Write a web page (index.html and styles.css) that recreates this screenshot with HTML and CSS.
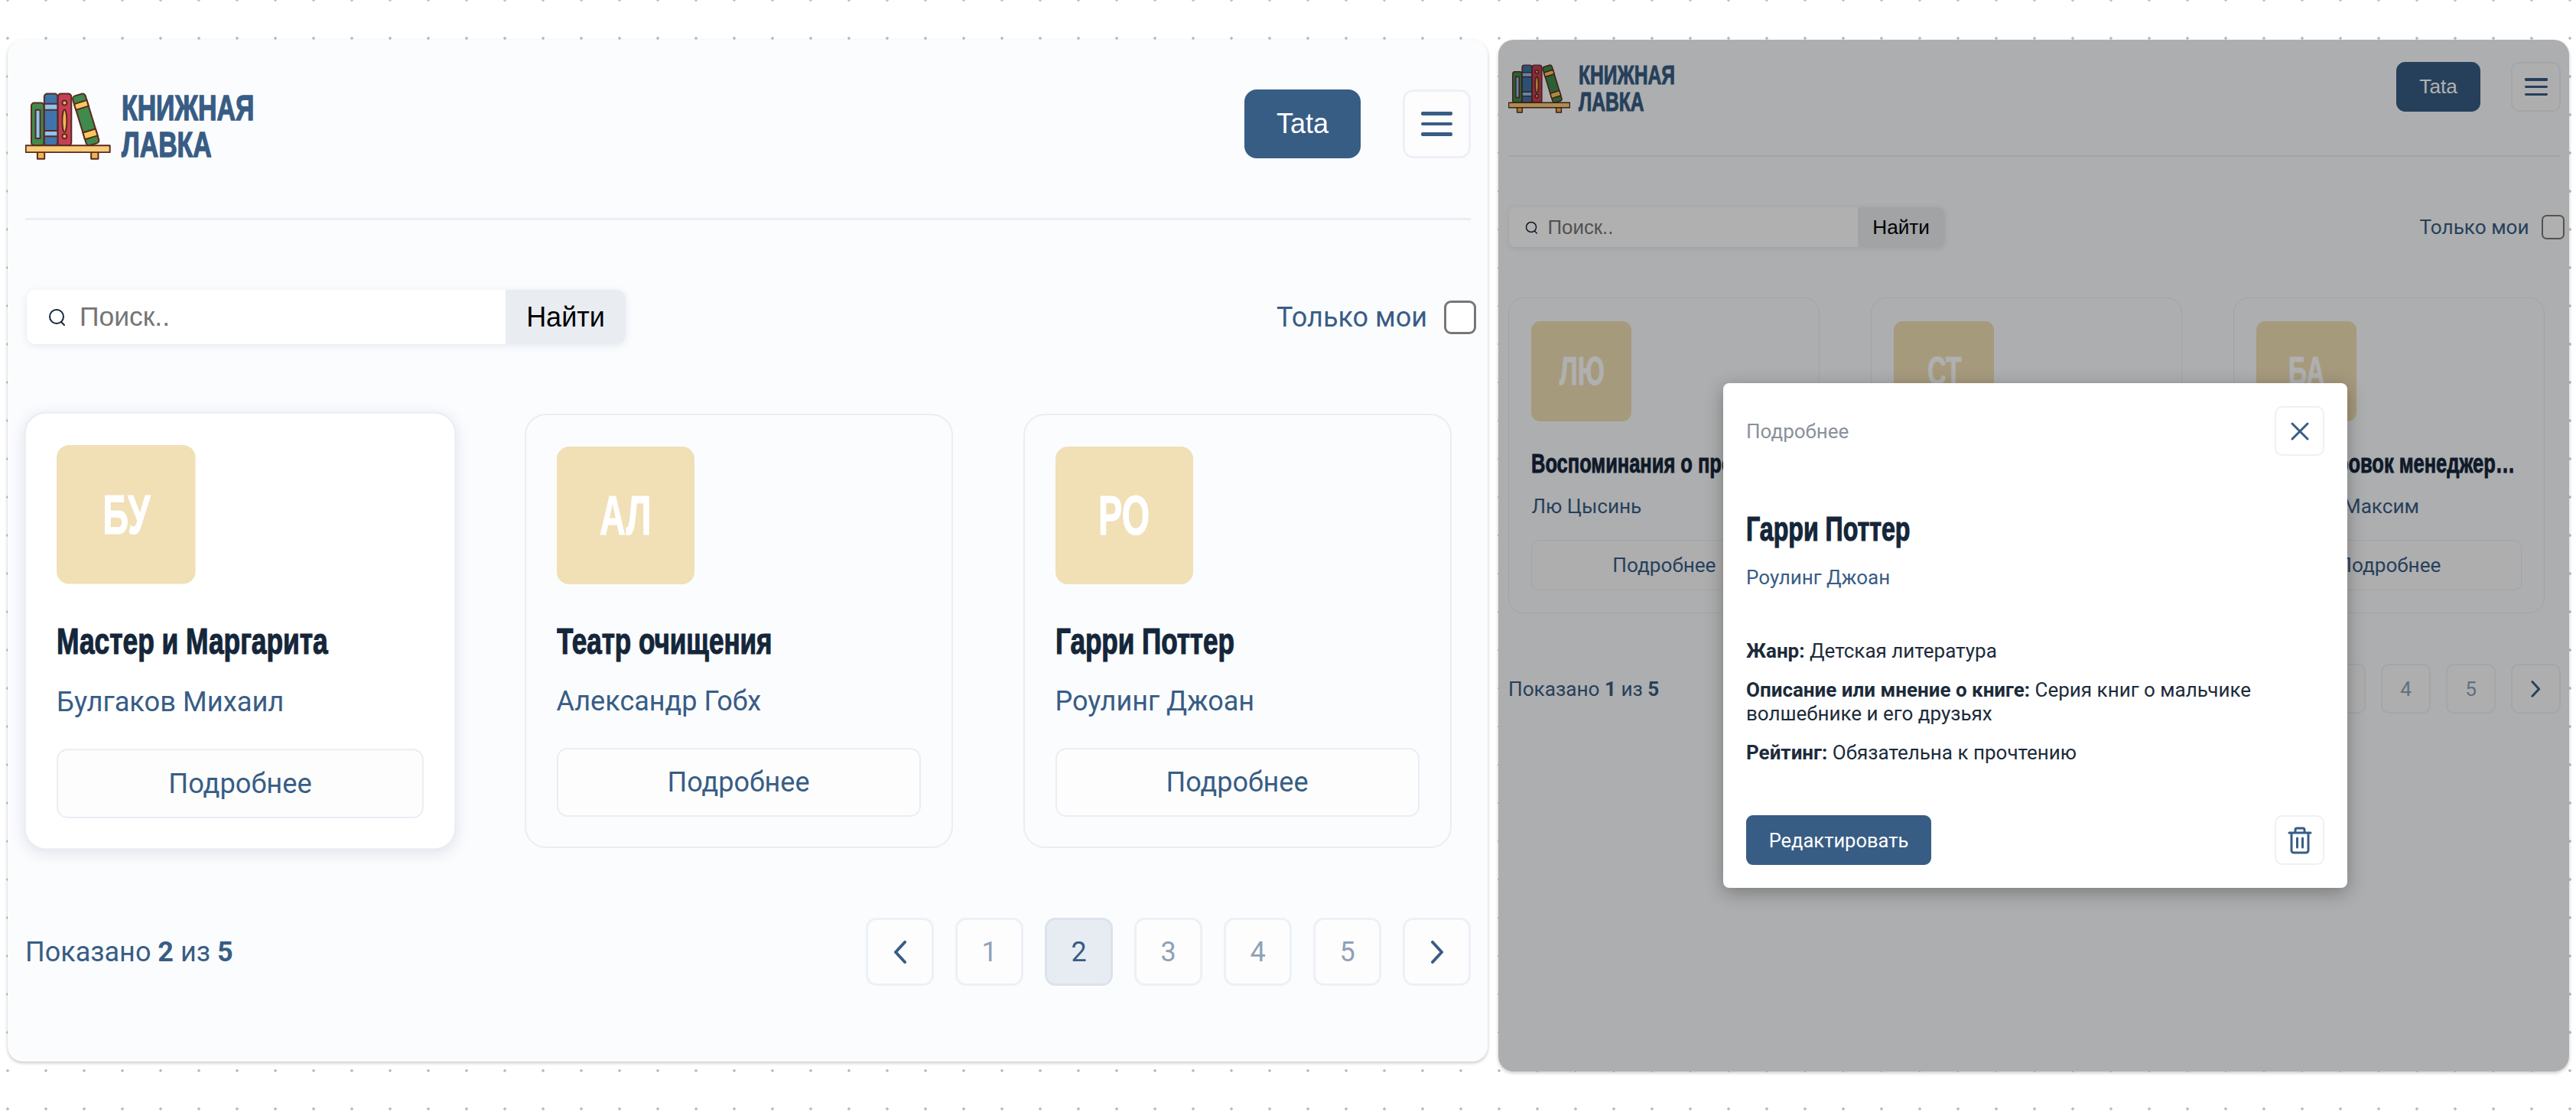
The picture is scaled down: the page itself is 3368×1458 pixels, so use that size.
FILE: index.html
```html
<!DOCTYPE html>
<html lang="ru">
<head>
    <meta charset="UTF-8">
    <meta name="viewport" content="width=device-width, initial-scale=1.0">
    <title>Книжная лавка</title>
    <link rel="stylesheet" href="styles.css">
</head>
<body>
    <svg class="sprite" width="0" height="0">
        <symbol id="logo" viewBox="98 114 338 264">
            <g stroke="#5b2a20" stroke-width="6" stroke-linejoin="round">
                <rect x="146" y="345" width="28" height="30" fill="#f2b550"/>
                <rect x="358" y="345" width="28" height="30" fill="#f2b550"/>
                <rect x="122" y="154" width="50" height="168" rx="12" fill="#3f8a4c"/>
                <rect x="139" y="182" width="18" height="112" fill="#8cc4f4"/>
                <rect x="173" y="118" width="53" height="204" rx="12" fill="#3f74ad"/>
                <rect x="173" y="158" width="53" height="24" fill="#8cc4f4"/>
                <rect x="173" y="264" width="53" height="22" fill="#8cc4f4"/>
                <rect x="227" y="118" width="53" height="204" rx="12" fill="#c63f57"/>
                <circle cx="253" cy="154" r="9" fill="#f2b550"/>
                <circle cx="253" cy="286" r="9" fill="#f2b550"/>
                <ellipse cx="253" cy="225" rx="9" ry="44" fill="#f2b550"/>
                <g transform="rotate(-17 337 220)">
                    <rect x="311" y="118" width="52" height="204" rx="12" fill="#3f8a4c"/>
                    <rect x="311" y="148" width="52" height="24" fill="#f9c860"/>
                    <rect x="311" y="266" width="52" height="28" fill="#f9c860"/>
                </g>
                <rect x="100" y="322" width="332" height="27" fill="#f9cd78"/>
            </g>
        </symbol>
        <symbol id="icon-search" viewBox="0 0 24 24">
            <circle cx="11" cy="11" r="9" fill="none" stroke="currentColor" stroke-width="2"/>
            <path d="M17 18l4 4" fill="none" stroke="currentColor" stroke-width="2" stroke-linecap="round"/>
        </symbol>
        <symbol id="icon-prev" viewBox="0 0 20 30">
            <path d="M16 2L4 15l12 13" fill="none" stroke="currentColor" stroke-width="4" stroke-linecap="round" stroke-linejoin="round"/>
        </symbol>
        <symbol id="icon-next" viewBox="0 0 20 30">
            <path d="M4 2l12 13L4 28" fill="none" stroke="currentColor" stroke-width="4" stroke-linecap="round" stroke-linejoin="round"/>
        </symbol>
    </svg>

    <main class="page">
        <section class="panel">
            <div class="panel-inner">
                <header class="topbar">
                    <div class="brand">
                        <svg class="brand-logo"><use href="#logo"/></svg>
                        <div class="brand-name"><span>КНИЖНАЯ</span><span>ЛАВКА</span></div>
                    </div>
                    <div class="topbar-actions">
                        <button class="btn-user" type="button">Tata</button>
                        <button class="btn-icon btn-menu" type="button" aria-label="Меню"><i></i><i></i><i></i></button>
                    </div>
                </header>

                <div class="toolbar">
                    <form class="search">
                        <div class="search-field">
                            <svg class="search-icon"><use href="#icon-search"/></svg>
                            <input class="search-input" type="text" placeholder="Поиск..">
                        </div>
                        <button class="search-btn" type="button">Найти</button>
                    </form>
                    <label class="only-mine">Только мои <input class="check" type="checkbox"></label>
                </div>

                <div class="cards">
                    <article class="card card-hover">
                        <div class="avatar"><span>БУ</span></div>
                        <h2 class="card-title">Мастер и Маргарита</h2>
                        <p class="card-author">Булгаков Михаил</p>
                        <button class="btn-more" type="button">Подробнее</button>
                    </article>
                    <article class="card">
                        <div class="avatar"><span>АЛ</span></div>
                        <h2 class="card-title">Театр очищения</h2>
                        <p class="card-author">Александр Гобх</p>
                        <button class="btn-more" type="button">Подробнее</button>
                    </article>
                    <article class="card">
                        <div class="avatar"><span>РО</span></div>
                        <h2 class="card-title">Гарри Поттер</h2>
                        <p class="card-author">Роулинг Джоан</p>
                        <button class="btn-more" type="button">Подробнее</button>
                    </article>
                </div>

                <footer class="pager">
                    <p class="pager-info">Показано <b>2</b> из <b>5</b></p>
                    <nav class="pager-list">
                        <button class="btn-icon page-btn page-arrow" type="button" aria-label="Назад"><svg class="chevron"><use href="#icon-prev"/></svg></button>
                        <button class="btn-icon page-btn" type="button">1</button>
                        <button class="btn-icon page-btn is-current" type="button">2</button>
                        <button class="btn-icon page-btn" type="button">3</button>
                        <button class="btn-icon page-btn" type="button">4</button>
                        <button class="btn-icon page-btn" type="button">5</button>
                        <button class="btn-icon page-btn page-arrow" type="button" aria-label="Вперёд"><svg class="chevron"><use href="#icon-next"/></svg></button>
                    </nav>
                </footer>
            </div>
        </section>

        <section class="panel panel-modal">
            <div class="panel-inner">
                <header class="topbar">
                    <div class="brand">
                        <svg class="brand-logo"><use href="#logo"/></svg>
                        <div class="brand-name"><span>КНИЖНАЯ</span><span>ЛАВКА</span></div>
                    </div>
                    <div class="topbar-actions">
                        <button class="btn-user" type="button">Tata</button>
                        <button class="btn-icon btn-menu" type="button" aria-label="Меню"><i></i><i></i><i></i></button>
                    </div>
                </header>

                <div class="toolbar">
                    <form class="search">
                        <div class="search-field">
                            <svg class="search-icon"><use href="#icon-search"/></svg>
                            <input class="search-input" type="text" placeholder="Поиск..">
                        </div>
                        <button class="search-btn" type="button">Найти</button>
                    </form>
                    <label class="only-mine">Только мои <input class="check" type="checkbox"></label>
                </div>

                <div class="cards">
                    <article class="card">
                        <div class="avatar"><span>ЛЮ</span></div>
                        <h2 class="card-title">Воспоминания о прошлом Земли</h2>
                        <p class="card-author">Лю Цысинь</p>
                        <button class="btn-more" type="button">Подробнее</button>
                    </article>
                    <article class="card">
                        <div class="avatar"><span>СТ</span></div>
                        <h2 class="card-title"></h2>
                        <p class="card-author"></p>
                        <button class="btn-more" type="button">Подробнее</button>
                    </article>
                    <article class="card">
                        <div class="avatar"><span>БА</span></div>
                        <h2 class="card-title">45 татуировок менеджера и другие</h2>
                        <p class="card-author">Батырев Максим</p>
                        <button class="btn-more" type="button">Подробнее</button>
                    </article>
                </div>

                <footer class="pager">
                    <p class="pager-info">Показано <b>1</b> из <b>5</b></p>
                    <nav class="pager-list">
                        <button class="btn-icon page-btn page-arrow" type="button" aria-label="Назад"><svg class="chevron"><use href="#icon-prev"/></svg></button>
                        <button class="btn-icon page-btn is-current" type="button">1</button>
                        <button class="btn-icon page-btn" type="button">2</button>
                        <button class="btn-icon page-btn" type="button">3</button>
                        <button class="btn-icon page-btn" type="button">4</button>
                        <button class="btn-icon page-btn" type="button">5</button>
                        <button class="btn-icon page-btn page-arrow" type="button" aria-label="Вперёд"><svg class="chevron"><use href="#icon-next"/></svg></button>
                    </nav>
                </footer>
            </div>

            <div class="overlay">
                <div class="modal">
                    <div class="modal-head">
                        <span class="modal-label">Подробнее</span>
                        <button class="modal-icon" type="button" aria-label="Закрыть">
                            <svg class="icon-close" viewBox="0 0 24 24"><path d="M2 2l20 20M22 2L2 22" fill="none" stroke="currentColor" stroke-width="3" stroke-linecap="round"/></svg>
                        </button>
                    </div>
                    <h2 class="modal-title">Гарри Поттер</h2>
                    <p class="modal-author">Роулинг Джоан</p>
                    <div class="modal-body">
                        <p><b>Жанр:</b> Детская литература</p>
                        <p><b>Описание или мнение о книге:</b> Серия книг о мальчике волшебнике и его друзьях</p>
                        <p><b>Рейтинг:</b> Обязательна к прочтению</p>
                    </div>
                    <div class="modal-foot">
                        <button class="btn-edit" type="button">Редактировать</button>
                        <button class="modal-icon" type="button" aria-label="Удалить">
                            <svg class="icon-trash" viewBox="0 0 32 36"><path d="M2 8h28M10 8V4a2 2 0 0 1 2-2h8a2 2 0 0 1 2 2v4M5 8v23a3 3 0 0 0 3 3h16a3 3 0 0 0 3-3V8M12.5 15v12M19.5 15v12" fill="none" stroke="currentColor" stroke-width="3" stroke-linecap="round" stroke-linejoin="round"/></svg>
                        </button>
                    </div>
                </div>
            </div>
        </section>
    </main>
</body>
</html>
```

FILE: styles.css
```css
* {
    box-sizing: border-box;
}
body {
    margin: 0;
    font-family: Roboto, Arial, sans-serif;
    color: #385d85;
    background-color: #fff;
    background-image: radial-gradient(circle, #bdbdbd 1.5px, transparent 2px);
    background-size: 50px 50px;
    background-position: -15px -25px;
}
button {
    font-family: inherit;
    cursor: pointer;
}
p, h2 {
    margin: 0;
}
.sprite {
    position: absolute;
}
.page {
    display: flex;
    align-items: flex-start;
    gap: 14px;
    height: 1458px;
    padding: 52px 0 0 10px;
}

/* panels */
.panel {
    position: relative;
    width: 1935px;
    height: 1336px;
    padding: 65px 22px 0 23px;
    background: #fbfcfe;
    border-radius: 20px;
    box-shadow: 0 2px 4px rgba(0,0,0,0.22);
    overflow: hidden;
}
.panel-modal {
    width: 1400px;
    height: 1349px;
    padding: 29px 11px 0 13px;
}
.panel-modal .panel-inner {
    zoom: 0.727;
}

/* top bar */
.topbar {
    display: flex;
    justify-content: space-between;
    align-items: flex-start;
    height: 171px;
    border-bottom: 3px solid #e9eff5;
}
.brand {
    display: flex;
    align-items: center;
    gap: 14px;
}
.brand-logo {
    width: 112px;
    height: 88px;
}
.brand-name {
    display: flex;
    flex-direction: column;
    font-family: "Liberation Sans", Arial, sans-serif;
    font-weight: 700;
    font-size: 47px;
    line-height: 48px;
    -webkit-text-stroke: 1.4px #385d85;
}
.brand-name span {
    transform: scaleX(0.72);
    transform-origin: left;
}
.topbar-actions {
    display: flex;
    gap: 55px;
}
.btn-user {
    width: 152px;
    height: 90px;
    border: none;
    border-radius: 16px;
    background: #385d85;
    color: #fff;
    font-family: "Liberation Sans", Arial, sans-serif;
    font-size: 36px;
}
.btn-icon {
    width: 89px;
    height: 89px;
    border: 3px solid #edf1f6;
    border-radius: 14px;
    background: #fdfdfe;
    color: #385d85;
}
.btn-menu {
    display: flex;
    flex-direction: column;
    justify-content: center;
    align-items: center;
    gap: 9px;
    height: 90px;
}
.btn-menu i {
    width: 41px;
    height: 4.5px;
    border-radius: 2px;
    background: #385d85;
}

/* search row */
.toolbar {
    display: flex;
    justify-content: space-between;
    align-items: center;
    margin-top: 91px;
}
.search {
    display: flex;
    width: 783px;
    height: 71px;
    margin-left: 2px;
    border-radius: 12px;
    box-shadow: 0 2px 10px rgba(60,80,120,0.12);
    overflow: hidden;
}
.search-field {
    display: flex;
    align-items: center;
    gap: 15px;
    flex: 1;
    padding-left: 28px;
    background: #fff;
}
.search-icon {
    width: 24px;
    height: 24px;
    color: #14263a;
}
.search-input {
    flex: 1;
    min-width: 0;
    border: none;
    outline: none;
    background: transparent;
    font-family: "Liberation Sans", Arial, sans-serif;
    font-size: 35.5px;
}
.search-input::placeholder {
    color: #757575;
}
.search-btn {
    width: 157px;
    border: none;
    background: #e9ecf0;
    color: #000;
    font-family: "Liberation Sans", Arial, sans-serif;
    font-size: 36px;
}
.only-mine {
    display: flex;
    align-items: center;
    gap: 22px;
    margin-right: -7px;
    font-size: 36px;
}
.check {
    appearance: none;
    width: 42px;
    height: 44px;
    margin: 0;
    border: 3px solid #777;
    border-radius: 9px;
    background: #fff;
}

/* cards */
.cards {
    display: grid;
    grid-template-columns: repeat(3, 560px);
    gap: 92px;
    margin: 91px 0 91px 0.5px;
}
.card {
    height: 568px;
    padding: 41px 40px;
    border: 2px solid #e9eef4;
    border-radius: 28px;
}
.card-hover {
    background: #fff;
    box-shadow: 0 4px 18px rgba(60,80,120,0.14);
    transform: scale(1.008);
}
.avatar {
    display: flex;
    justify-content: center;
    align-items: center;
    width: 180px;
    height: 180px;
    border-radius: 16px;
    background: #f1dfb6;
    color: #fff;
    font-family: "Liberation Sans", Arial, sans-serif;
    font-weight: 700;
    font-size: 72px;
    -webkit-text-stroke: 1.2px #fff;
}
.avatar span {
    transform: scaleX(0.65);
}
.card-title {
    width: 652px;
    height: 62px;
    margin-top: 44px;
    overflow: hidden;
    color: #14263a;
    font-family: "Liberation Sans", Arial, sans-serif;
    font-weight: 700;
    font-size: 48px;
    line-height: 62px;
    white-space: nowrap;
    text-overflow: ellipsis;
    -webkit-text-stroke: 1.2px #14263a;
    transform: scaleX(0.73);
    transform-origin: left;
}
.card-author {
    height: 42px;
    margin-top: 26px;
    font-size: 36px;
    line-height: 42px;
}
.btn-more {
    width: 100%;
    height: 90px;
    margin-top: 40px;
    border: 2px solid #e9eef4;
    border-radius: 14px;
    background: #fdfdfe;
    color: #385d85;
    font-size: 36px;
}

/* pagination */
.pager {
    display: flex;
    justify-content: space-between;
    align-items: center;
}
.pager-info {
    font-size: 36px;
}
.pager-list {
    display: flex;
    gap: 28px;
}
.page-btn {
    color: #8fa1b5;
    font-size: 36px;
}
.page-btn.is-current {
    background: #e7ecf3;
    border-color: #dde3ec;
    color: #385d85;
}
.page-arrow {
    display: flex;
    justify-content: center;
    align-items: center;
}
.chevron {
    width: 20px;
    height: 30px;
    color: #385d85;
}

/* modal */
.overlay {
    position: absolute;
    inset: 0;
    display: flex;
    justify-content: center;
    align-items: flex-start;
    padding: 449px 0 0 4px;
    background: rgba(0,0,0,0.31);
}
.modal {
    display: flex;
    flex-direction: column;
    width: 816px;
    height: 660px;
    padding: 30px;
    background: #fff;
    border-radius: 8px;
    box-shadow: 0 6px 24px rgba(0,0,0,0.3);
}
.modal-head {
    display: flex;
    justify-content: space-between;
    align-items: center;
}
.modal-label {
    color: #8a9199;
    font-size: 26px;
}
.modal-icon {
    display: flex;
    justify-content: center;
    align-items: center;
    width: 65px;
    height: 65px;
    padding: 0;
    border: 2px solid #edf1f6;
    border-radius: 10px;
    background: #fff;
    color: #385d85;
}
.icon-close {
    width: 24px;
    height: 24px;
}
.icon-trash {
    width: 32px;
    height: 36px;
}
.modal-title {
    width: 720px;
    margin-top: 68px;
    color: #14263a;
    font-family: "Liberation Sans", Arial, sans-serif;
    font-weight: 700;
    font-size: 44px;
    line-height: 56px;
    -webkit-text-stroke: 1.2px #14263a;
    transform: scaleX(0.73);
    transform-origin: left;
}
.modal-author {
    margin-top: 20px;
    font-size: 26px;
    line-height: 30px;
}
.modal-body {
    margin-top: 66px;
    color: #1c2b3a;
    font-size: 26px;
    line-height: 31px;
}
.modal-body p {
    margin-bottom: 20px;
}
.modal-foot {
    display: flex;
    justify-content: space-between;
    margin-top: auto;
}
.btn-edit {
    width: 242px;
    height: 65px;
    border: none;
    border-radius: 9px;
    background: #385d85;
    color: #fff;
    font-size: 25.5px;
}
```
